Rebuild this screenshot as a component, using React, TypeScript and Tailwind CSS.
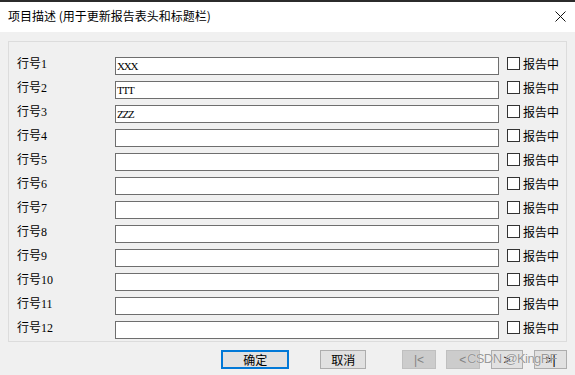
const rows = [
  { label: "行号1", value: "XXX" },
  { label: "行号2", value: "TTT" },
  { label: "行号3", value: "ZZZ" },
  { label: "行号4", value: "" },
  { label: "行号5", value: "" },
  { label: "行号6", value: "" },
  { label: "行号7", value: "" },
  { label: "行号8", value: "" },
  { label: "行号9", value: "" },
  { label: "行号10", value: "" },
  { label: "行号11", value: "" },
  { label: "行号12", value: "" },
];

const cjk = { fontFamily: '"Noto Sans CJK SC", "Liberation Sans", sans-serif' };
const labelFont = { fontFamily: '"Liberation Serif", "Noto Sans CJK SC", serif' };
const btnFont = { fontFamily: '"Liberation Sans", sans-serif' };

function CloseIcon() {
  return (
    <svg width="11" height="11" viewBox="0 0 11 11" className="block">
      <path d="M0.5 0.5 L10.5 10.5 M10.5 0.5 L0.5 10.5" stroke="#111" strokeWidth="1" />
    </svg>
  );
}

export default function App() {
  return (
    <div
      className="w-[575px] h-[375px] bg-[#f0f0f0] flex flex-col overflow-hidden text-black"
      style={cjk}
    >
      {/* Title bar */}
      <div className="h-[32px] shrink-0 bg-white border-t-2 border-[#2b2b2b] flex items-center justify-between pl-[8px] pr-[9px] pb-[2px]">
        <span className="text-[12px] leading-[14px]">项目描述 (用于更新报告表头和标题栏)</span>
        <CloseIcon />
      </div>

      <div className="flex-1 px-[8px] pt-[9px]">
        {/* Group box */}
        <div className="h-[301px] border border-[#dcdcdc] pt-[15px] pl-[8px] flex flex-col gap-[6px]">
          {rows.map((row) => (
            <div key={row.label} className="flex h-[18px] items-start">
              <span className="w-[98px] text-[12px] leading-[15px]" style={labelFont}>
                {row.label}
              </span>
              <div
                className="w-[384px] h-[18px] bg-white border border-[#6e6e6e] pl-[1px] text-[11px] leading-[17px] tracking-[-1.2px]"
                style={{ fontFamily: '"Liberation Serif", serif' }}
              >
                {row.value}
              </div>
              <div className="ml-[8px] flex items-center h-[13px] gap-[3px]">
                <div className="w-[13px] h-[13px] bg-white border border-[#333333]" />
                <span className="text-[12px] leading-[13px]">报告中</span>
              </div>
            </div>
          ))}
        </div>

        {/* Buttons */}
        <div className="relative mt-[8px] flex h-[19px] text-[12px]">
          <button className="ml-[213px] w-[69px] h-[19px] bg-[#e1e1e1] border-2 border-[#0078d7] leading-[14px]">
            确定
          </button>
          <button className="ml-[31px] w-[46px] h-[19px] bg-[#e1e1e1] border border-[#adadad] leading-[16px]">
            取消
          </button>
          <button
            className="ml-[36px] w-[34px] h-[19px] bg-[#cccccc] border border-[#bfbfbf] text-[#838383] leading-[16px]"
            style={btnFont}
          >
            |&lt;
          </button>
          <button
            className="ml-[10px] w-[34px] h-[19px] bg-[#cccccc] border border-[#bfbfbf] text-[#838383] leading-[16px]"
            style={btnFont}
          >
            &lt;
          </button>
          <button
            className="ml-[11px] w-[33px] h-[19px] bg-[#e1e1e1] border border-[#adadad] leading-[16px]"
            style={btnFont}
          >
            &gt;
          </button>
          <button
            className="ml-[11px] w-[33px] h-[19px] bg-[#e1e1e1] border border-[#adadad] leading-[16px]"
            style={btnFont}
          >
            &gt;|
          </button>
          {/* watermark */}
          <span
            className="absolute left-[459px] top-[1px] text-[13px] leading-[16px] tracking-[-0.6px] text-[#8c8c8c]/90 pointer-events-none"
            style={{ fontFamily: '"Liberation Sans", sans-serif', textShadow: "0 0 1px #ffffff" }}
          >
            CSDN @KingRF
          </span>
        </div>
      </div>
    </div>
  );
}
